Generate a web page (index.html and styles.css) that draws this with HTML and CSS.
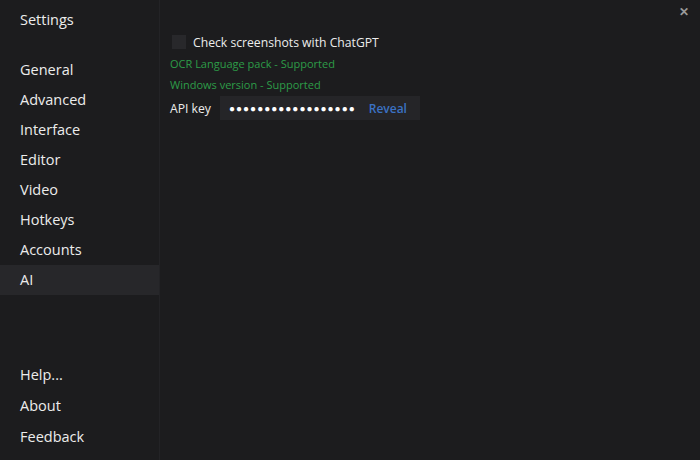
FILE: index.html
```html
<html>
  <head>
    <title>Settings</title>
    <link rel="stylesheet" href="styles.css">
  </head>
  <body>
    <div class="window">
      <div class="sidebar">
        <div class="title">Settings</div>
        <ul class="nav">
          <li>General</li>
          <li>Advanced</li>
          <li>Interface</li>
          <li>Editor</li>
          <li>Video</li>
          <li>Hotkeys</li>
          <li>Accounts</li>
          <li class="active">AI</li>
        </ul>
        <ul class="nav bottom">
          <li>Help...</li>
          <li>About</li>
          <li>Feedback</li>
        </ul>
      </div>
      <div class="content">
        <label class="check">
          <span class="box"></span>
          Check screenshots with ChatGPT
        </label>
        <div class="status">OCR Language pack - Supported</div>
        <div class="status">Windows version - Supported</div>
        <div class="key-row">
          <span class="key-label">API key</span>
          <div class="key-field">
            <span class="dots">&#9679;&#9679;&#9679;&#9679;&#9679;&#9679;&#9679;&#9679;&#9679;&#9679;&#9679;&#9679;&#9679;&#9679;&#9679;&#9679;&#9679;&#9679;</span>
            <span class="reveal">Reveal</span>
          </div>
        </div>
      </div>
      <div class="close">&#10005;</div>
    </div>
  </body>
</html>
```
FILE: styles.css
```css
* {
  box-sizing: border-box;
}
body {
  margin: 0;
  background: #1c1c1e;
  color: #ececec;
  font-family: "Open Sans", "Noto Sans", sans-serif;
}
.window {
  display: flex;
  width: 700px;
  height: 460px;
  position: relative;
}
.sidebar {
  width: 160px;
  border-right: 1px solid #232326;
  display: flex;
  flex-direction: column;
  padding-top: 8px;
  padding-bottom: 8px;
}
.title {
  font-size: 14.5px;
  padding-left: 20px;
  height: 24px;
  line-height: 24px;
}
.nav {
  list-style: none;
  margin: 0;
  padding: 0;
}
.nav:first-of-type {
  margin-top: 23px;
}
.nav li {
  font-size: 14.5px;
  height: 30px;
  line-height: 30px;
  padding-left: 20px;
}
.nav li.active {
  background: #27272a;
}
.nav.bottom {
  margin-top: auto;
}
.nav.bottom li {
  height: 31px;
  line-height: 31px;
}
.content {
  flex: 1;
  padding: 33px 10px 0 10px;
  font-size: 12.2px;
}
.check {
  display: flex;
  align-items: center;
  gap: 7px;
  height: 18px;
  padding-left: 2px;
}
.box {
  width: 14px;
  height: 14px;
  background: #28282b;
}
.status {
  color: #2d9c48;
  font-size: 11px;
  height: 21px;
  line-height: 21px;
}
.status:first-of-type {
  margin-top: 2px;
}
.key-row {
  display: flex;
  align-items: center;
  margin-top: 1px;
}
.key-label {
  width: 50px;
}
.key-field {
  display: flex;
  align-items: center;
  width: 200px;
  height: 24px;
  background: #252528;
  padding-left: 9px;
  gap: 13px;
}
.dots {
  font-size: 10px;
  letter-spacing: 1px;
  color: #ffffff;
}
.reveal {
  color: #3b72c4;
  font-weight: 600;
  font-size: 12px;
}
.close {
  position: absolute;
  top: 3px;
  right: 11px;
  color: #9a9a9a;
  font-size: 12px;
  font-weight: bold;
}
```
